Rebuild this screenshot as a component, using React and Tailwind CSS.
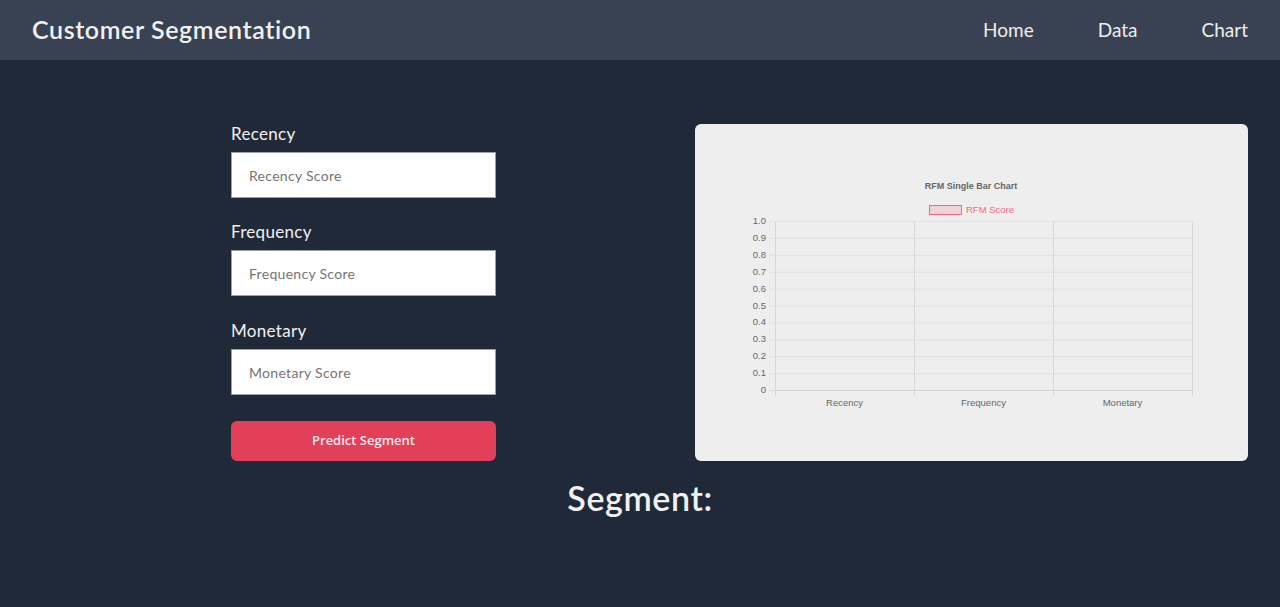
import React from 'react';

const yTicks = [1.0, 0.9, 0.8, 0.7, 0.6, 0.5, 0.4, 0.3, 0.2, 0.1, 0];

// chart coords are relative to the card (card top-left = 695,124)
const RfmChart = () => {
  const left = 80;
  const right = 497;
  const top = 97;
  const bottom = 266;
  const yOf = (v) => bottom - v * (bottom - top);
  const cols = [80, 219, 358, 497];
  const labels = ['Recency', 'Frequency', 'Monetary'];

  return (
    <svg width="553" height="337" viewBox="0 0 553 337" className="block" style={{ fontFamily: '"Liberation Sans", Arial, sans-serif' }}>
      <text x="276" y="65" textAnchor="middle" fontSize="9" fontWeight="bold" fill="#666">
        RFM Single Bar Chart
      </text>
      <rect x="234.5" y="81.5" width="32" height="9" fill="rgba(255,99,132,0.2)" stroke="rgb(255,99,132)" strokeWidth="1" />
      <text x="271" y="89" fontSize="9.5" fill="rgb(255,99,132)">RFM Score</text>

      {yTicks.map((v) => (
        <g key={v}>
          <line x1={left - 6} x2={right} y1={yOf(v) + 0.5} y2={yOf(v) + 0.5} stroke={v === 0 ? '#d6d6d6' : '#e0e0e0'} />
          <text x={left - 9} y={yOf(v) + 3} textAnchor="end" fontSize="9.5" fill="#666">
            {v === 0 ? '0' : v.toFixed(1)}
          </text>
        </g>
      ))}
      {cols.map((x) => (
        <line key={x} x1={x + 0.5} x2={x + 0.5} y1={top} y2={bottom + 6} stroke="#d8d8d8" />
      ))}
      {labels.map((l, i) => (
        <text key={l} x={(cols[i] + cols[i + 1]) / 2} y={282} textAnchor="middle" fontSize="9.5" fill="#666">
          {l}
        </text>
      ))}
    </svg>
  );
};

const Field = ({ label, placeholder }) => (
  <div className="flex flex-col">
    <label className="text-[17px] leading-5 tracking-[0.3px] text-[#f1f1f1] mb-2">{label}</label>
    <input
      type="text"
      placeholder={placeholder}
      className="h-[46px] w-full bg-white border border-[#9aa0aa] px-[17px] text-[14px] tracking-[0.3px] text-gray-800 placeholder:text-[#757575] outline-none"
    />
  </div>
);

export default function App() {
  return (
    <div className="min-h-[607px] bg-[#1f2937] text-white" style={{ fontFamily: 'Lato, "Open Sans", sans-serif' }}>
      <nav className="h-[60px] bg-[#394252] flex items-center justify-between px-8">
        <h1 className="text-[25px] font-semibold text-[#f1f1f1] tracking-[0.6px]">Customer Segmentation</h1>
        <ul className="flex items-center gap-[64px] text-[19px] text-[#eeeeee]">
          <li>Home</li>
          <li>Data</li>
          <li>Chart</li>
        </ul>
      </nav>

      <main className="pt-16 px-8">
        <div className="flex items-start">
          <div className="ml-[199px] w-[265px] flex flex-col gap-6">
            <Field label="Recency" placeholder="Recency Score" />
            <Field label="Frequency" placeholder="Frequency Score" />
            <div className="mt-px">
              <Field label="Monetary" placeholder="Monetary Score" />
            </div>
            <button
              className="mt-[2px] h-10 w-full rounded-md bg-[#e23f5b] text-[13px] font-semibold text-[#fbeaea]"
              style={{ fontFamily: '"Open Sans", sans-serif' }}
            >
              Predict Segment
            </button>
          </div>
          <div className="ml-auto w-[553px] h-[337px] rounded-md bg-[#eeeeee] overflow-hidden">
            <RfmChart />
          </div>
        </div>
        <h2 className="mt-[17px] text-center text-[34px] leading-10 font-semibold tracking-[0.6px] text-[#f1f1f1]">Segment:</h2>
      </main>
    </div>
  );
}
